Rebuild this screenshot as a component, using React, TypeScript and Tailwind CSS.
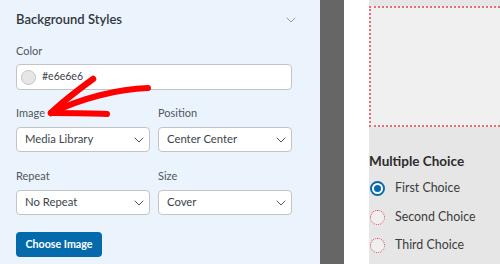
import { ChevronDown } from 'lucide-react'

function SelectBox({ value }: { value: string }) {
  return (
    <div className="flex h-[25px] w-[134px] items-center justify-between rounded-[4px] border border-[#c3c4c7] bg-white pl-[8px] pr-[2px] text-[11.3px] text-[#3c434a]">
      <span>{value}</span>
      <ChevronDown size={16} strokeWidth={1.5} className="text-[#50575e]" />
    </div>
  )
}

function Field({ label, value }: { label: string; value: string }) {
  return (
    <div className="flex flex-col">
      <div className="h-[18px] text-[11px] leading-[18px] text-[#50575e]">{label}</div>
      <div className="mt-[5px]">
        <SelectBox value={value} />
      </div>
    </div>
  )
}

function Radio({ checked, label }: { checked?: boolean; label: string }) {
  return (
    <div className="flex h-[28.5px] items-center gap-[10px]">
      {checked ? (
        <span className="flex h-[15px] w-[15px] items-center justify-center rounded-full border-2 border-[#056aab] bg-white">
          <span className="h-[7px] w-[7px] rounded-full bg-[#056aab]" />
        </span>
      ) : (
        <span className="h-[15px] w-[15px] rounded-full border border-dotted border-[#d64550] bg-[#f0f0f0]" />
      )}
      <span className="text-[12.4px] text-[#3c3c3c]">{label}</span>
    </div>
  )
}

export default function App() {
  return (
    <div className="relative flex h-[264px] w-[500px] overflow-hidden font-[Lato,sans-serif]">
      <div className="flex w-[320px] shrink-0 flex-col bg-[#ebf3fc] px-4">
        <div className="mt-[10px] flex h-[20px] items-center justify-between">
          <span className="text-[13px] font-semibold text-[#32373c]">Background Styles</span>
          <ChevronDown size={16} strokeWidth={1.4} className="mr-[5px] text-[#8c8f94]" />
        </div>

        <div className="mt-[12px] h-[18px] text-[11px] leading-[18px] text-[#50575e]">Color</div>
        <div className="mt-[4px] flex h-[26px] w-[276px] items-center gap-[6px] rounded-[4px] border border-[#c3c4c7] bg-white px-[4px]">
          <span className="h-[15px] w-[15px] rounded-full border border-[#c3c4c7] bg-[#e6e6e6]" />
          <span className="text-[10.5px] text-[#3c434a]">#e6e6e6</span>
        </div>

        <div className="mt-[14px] flex gap-[8px]">
          <Field label="Image" value="Media Library" />
          <Field label="Position" value="Center Center" />
        </div>

        <div className="mt-[15px] flex gap-[8px]">
          <Field label="Repeat" value="No Repeat" />
          <Field label="Size" value="Cover" />
        </div>

        <button className="mt-[17px] flex h-[25px] w-[86px] items-center justify-center rounded-[4px] bg-[#056aab] text-[10.7px] font-bold text-white">
          Choose Image
        </button>
      </div>

      <div className="w-[24px] shrink-0 bg-[#666]" />
      <div className="w-[25px] shrink-0 bg-white" />

      <div className="flex flex-1 flex-col bg-[#e6e6e6]">
        <div className="mt-[6px] h-[121px] border-2 border-r-0 border-dotted border-[#e0707a] bg-[#f0f0f0]" />
        <div className="mt-[24px] text-[13.5px] font-bold text-[#2c2c2c]">Multiple Choice</div>
        <div className="mt-[3px] flex flex-col pl-[1px]">
          <Radio checked label="First Choice" />
          <Radio label="Second Choice" />
          <Radio label="Third Choice" />
        </div>
      </div>

      <svg
        className="pointer-events-none absolute left-0 top-0"
        width="320"
        height="264"
        viewBox="0 0 320 264"
        fill="none"
      >
        <path d="M148 88 C 118 89, 82 98, 51 113" stroke="#f00" strokeWidth="6" strokeLinecap="round" />
        <path d="M93 79 C 78 90, 62 102, 51 113" stroke="#f00" strokeWidth="6.5" strokeLinecap="round" />
        <path d="M51 113 C 70 113, 90 113, 107 114" stroke="#f00" strokeWidth="6" strokeLinecap="round" />
      </svg>
    </div>
  )
}
